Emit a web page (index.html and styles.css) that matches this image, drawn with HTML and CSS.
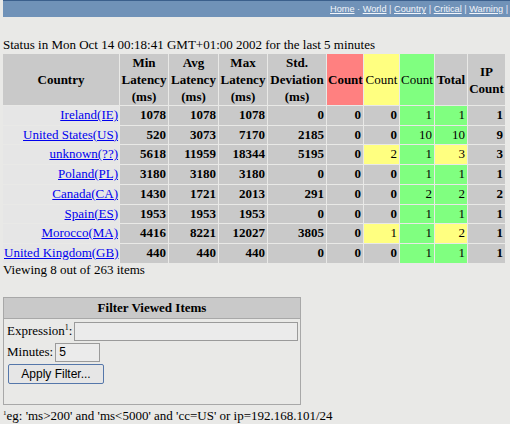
FILE: index.html
```html
<!DOCTYPE html>
<html lang="en">
<head>
    <meta charset="UTF-8">
    <title>Status by Country</title>
    <link rel="stylesheet" href="styles.css">
</head>
<body>
    <div class="navbar">
        <a href="#">Home</a> · <a href="#">World</a> | <a href="#">Country</a> | <a href="#">Critical</a> | <a href="#">Warning</a> | <a href="#">Info</a>
    </div>

    <div class="status-line">Status in Mon Oct 14 00:18:41 GMT+01:00 2002 for the last 5 minutes</div>

    <table class="status-table">
        <colgroup>
            <col style="width:116px"><col style="width:48px"><col style="width:49px"><col style="width:48px"><col style="width:58px">
            <col style="width:36px"><col style="width:35px"><col style="width:34px"><col style="width:32px"><col style="width:37px">
        </colgroup>
        <thead>
            <tr>
                <th>Country</th>
                <th>Min Latency (ms)</th>
                <th>Avg Latency (ms)</th>
                <th>Max Latency (ms)</th>
                <th>Std. Deviation (ms)</th>
                <th class="crit">Count</th>
                <th class="warn plain">Count</th>
                <th class="ok plain">Count</th>
                <th>Total</th>
                <th>IP Count</th>
            </tr>
        </thead>
        <tbody>
            <tr><td class="country"><a href="#">Ireland(IE)</a></td><td>1078</td><td>1078</td><td>1078</td><td>0</td><td>0</td><td>0</td><td class="ok">1</td><td class="ok">1</td><td>1</td></tr>
            <tr><td class="country"><a href="#">United States(US)</a></td><td>520</td><td>3073</td><td>7170</td><td>2185</td><td>0</td><td>0</td><td class="ok">10</td><td class="ok">10</td><td>9</td></tr>
            <tr><td class="country"><a href="#">unknown(??)</a></td><td>5618</td><td>11959</td><td>18344</td><td>5195</td><td>0</td><td class="warn">2</td><td class="ok">1</td><td class="warn">3</td><td>3</td></tr>
            <tr><td class="country"><a href="#">Poland(PL)</a></td><td>3180</td><td>3180</td><td>3180</td><td>0</td><td>0</td><td>0</td><td class="ok">1</td><td class="ok">1</td><td>1</td></tr>
            <tr><td class="country"><a href="#">Canada(CA)</a></td><td>1430</td><td>1721</td><td>2013</td><td>291</td><td>0</td><td>0</td><td class="ok">2</td><td class="ok">2</td><td>2</td></tr>
            <tr><td class="country"><a href="#">Spain(ES)</a></td><td>1953</td><td>1953</td><td>1953</td><td>0</td><td>0</td><td>0</td><td class="ok">1</td><td class="ok">1</td><td>1</td></tr>
            <tr><td class="country"><a href="#">Morocco(MA)</a></td><td>4416</td><td>8221</td><td>12027</td><td>3805</td><td>0</td><td class="warn">1</td><td class="ok">1</td><td class="warn">2</td><td>1</td></tr>
            <tr><td class="country"><a href="#">United Kingdom(GB)</a></td><td>440</td><td>440</td><td>440</td><td>0</td><td>0</td><td>0</td><td class="ok">1</td><td class="ok">1</td><td>1</td></tr>
        </tbody>
    </table>
    <div class="viewing">Viewing 8 out of 263 items</div>

    <form class="filter-box">
        <div class="filter-title">Filter Viewed Items</div>
        <div class="filter-body">
            <div class="filter-row">
                <label>Expression<sup>1</sup>:</label>
                <input type="text" class="expr-input">
            </div>
            <div class="filter-row">
                <label>Minutes:</label>
                <input type="text" class="min-input" value="5">
            </div>
            <button type="button" class="apply-btn">Apply Filter...</button>
        </div>
    </form>
    <div class="footnote"><sup>1</sup>eg: 'ms&gt;200' and 'ms&lt;5000' and 'cc=US' or ip=192.168.101/24</div>
</body>
</html>
```

FILE: styles.css
```css
body {
    margin: 0;
    padding: 0 0 0 3px;
    background-color: #e9e9e7;
    font-family: "Liberation Serif", "Times New Roman", serif;
    font-size: 13px;
    color: #000;
    overflow: hidden;
}
a {
    color: #0000ee;
}
.navbar {
    height: 16px;
    background-color: #7092b8;
    border-top: 1px solid #3b5f8c;
    color: #e8eef8;
    font-family: "Liberation Sans", Arial, sans-serif;
    font-size: 9.2px;
    line-height: 16px;
    white-space: nowrap;
    padding-left: 327px;
    overflow: hidden;
}
.navbar a {
    color: #f2f5fa;
}
.status-line {
    margin-top: 19px;
    line-height: 17px;
}
.status-table {
    border-spacing: 1px;
    table-layout: fixed;
    width: 503px;
    margin-left: -1px;
}
.status-table th,
.status-table td {
    background-color: #c9c9c9;
    padding: 1px 2px 1px 1px;
    line-height: 16.7px;
    white-space: nowrap;
}
.status-table th {
    text-align: center;
    font-weight: bold;
    line-height: 17px;
    padding: 0 1px;
    white-space: normal;
}
.status-table td {
    text-align: right;
    font-weight: bold;
}
.status-table td.country {
    background-color: #e6e6e6;
    font-weight: normal;
    padding-right: 1px;
}
.status-table .crit {
    background-color: #ff8080;
}
.status-table .warn {
    background-color: #ffff80;
    font-weight: normal;
}
.status-table .ok {
    background-color: #80ff80;
    font-weight: normal;
}
.viewing {
    line-height: 16px;
    margin-top: -2px;
}
.filter-box {
    width: 296px;
    margin-top: 19px;
    border: 1px solid #a8a8a8;
}
.filter-title {
    background-color: #c9c9c9;
    text-align: center;
    font-weight: bold;
    line-height: 20px;
    border-bottom: 1px solid #a8a8a8;
}
.filter-body {
    padding: 3px 2px 20px 3px;
}
.filter-row {
    display: flex;
    align-items: center;
    margin-bottom: 2px;
}
.filter-row label {
    margin-right: 2px;
}
.filter-row sup {
    font-size: 8px;
    line-height: 0;
}
.expr-input,
.min-input {
    height: 19px;
    box-sizing: border-box;
    border: 1px solid #9a9a9a;
    background-color: #ebebeb;
    font-family: "Liberation Sans", Arial, sans-serif;
    font-size: 12px;
    padding: 0 3px;
}
.expr-input {
    flex: 1;
}
.min-input {
    width: 45px;
}
.apply-btn {
    margin-left: 1px;
    width: 96px;
    height: 20px;
    background-color: #e6e6e6;
    border: 1px solid #5577aa;
    border-radius: 2px;
    font-family: "Liberation Sans", Arial, sans-serif;
    font-size: 12px;
    padding: 0;
}
.footnote {
    margin-top: 3px;
    font-size: 13px;
}
.footnote sup {
    font-size: 7px;
}
```
